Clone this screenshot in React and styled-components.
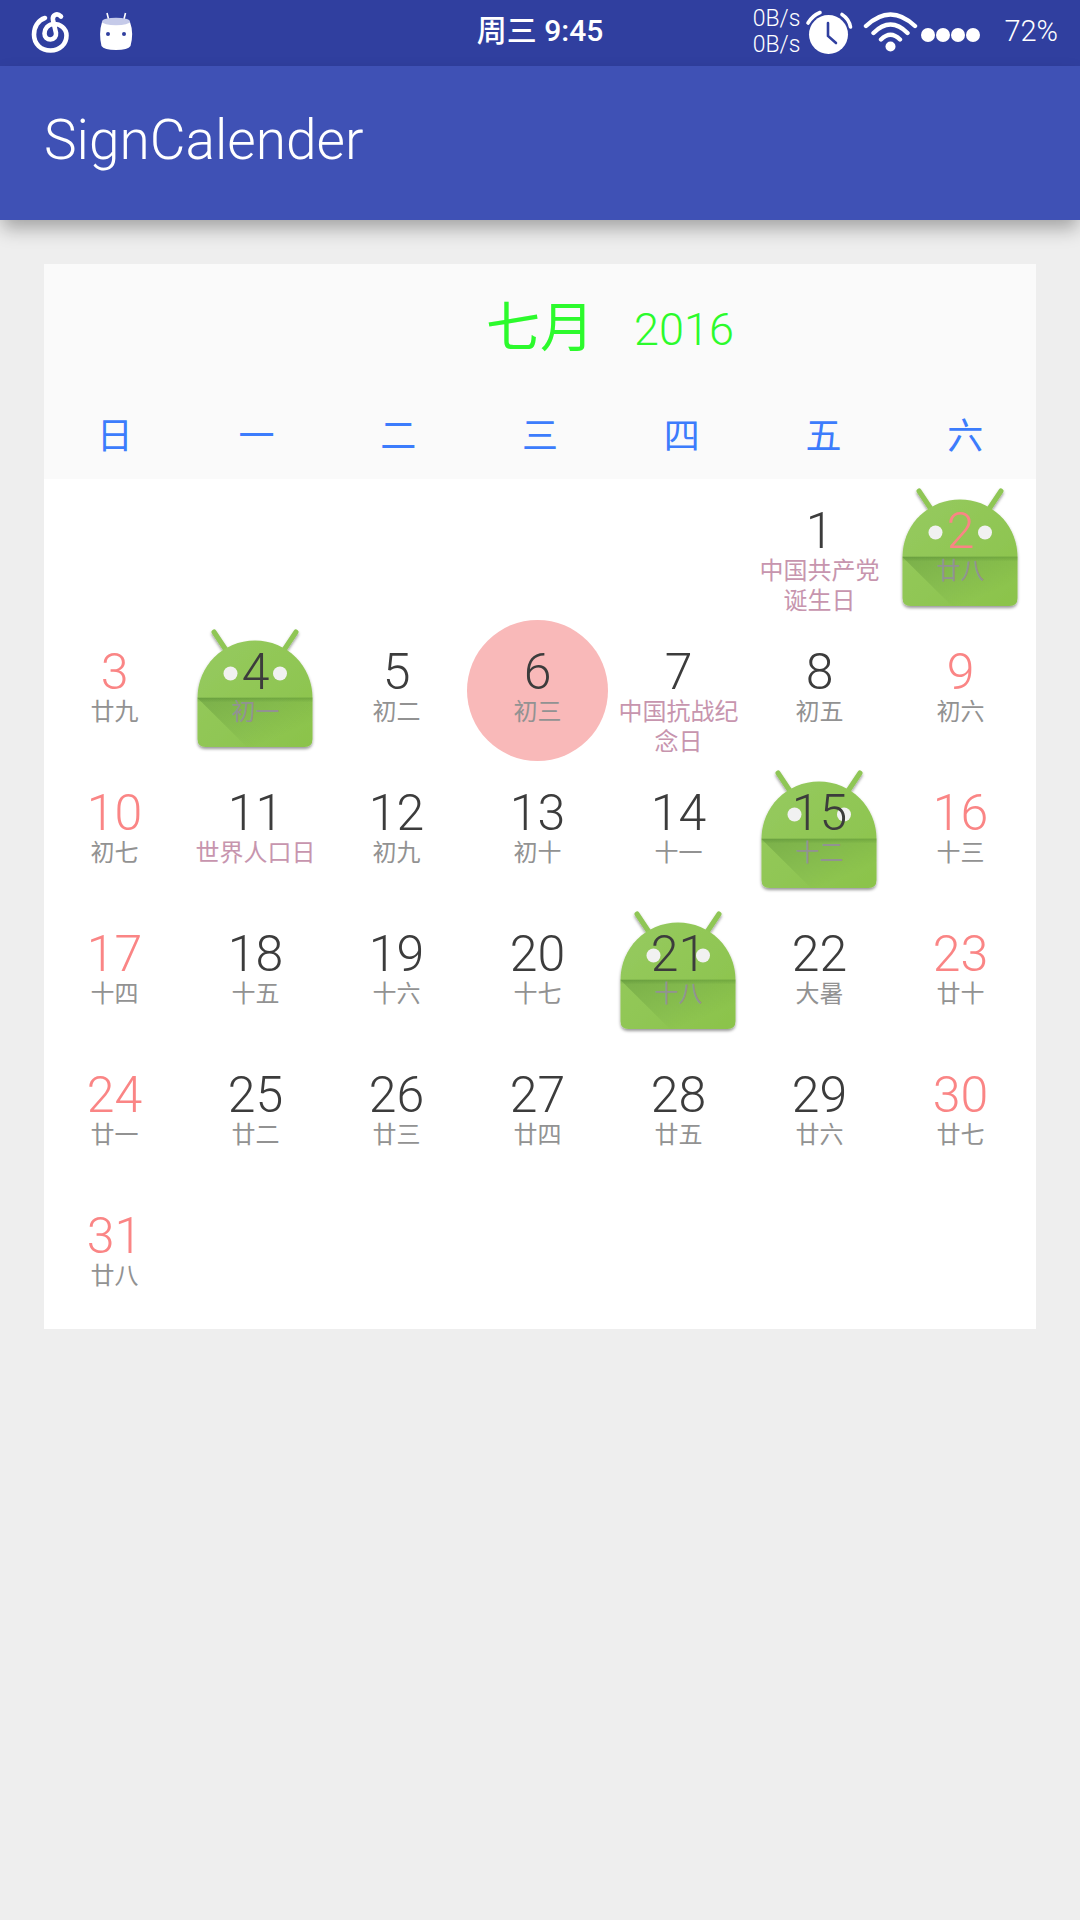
import React from "react";
import styled, { createGlobalStyle } from "styled-components";

const Global = createGlobalStyle`
  * { box-sizing: border-box; }
  html, body { margin: 0; background: #eeeeee; }
  body {
    font-family: Roboto, "Noto Sans CJK SC", sans-serif;
    font-weight: 300;
    min-height: 100vh;
  }
`;

const StatusBar = styled.div`
  display: grid;
  grid-template-columns: 1fr auto 1fr;
  align-items: center;
  height: 66px;
  padding: 0 22px 2px;
  background: #303f9f;
  color: #ffffff;
`;

const Notifications = styled.div`
  display: flex;
  gap: 24px;
  padding-left: 6px;
`;

const Clock = styled.time`
  padding-bottom: 2px;
  font-size: 30px;
  font-weight: 500;
  line-height: 40px;
`;

const Indicators = styled.div`
  display: flex;
  align-items: center;
  justify-content: flex-end;
`;

const Speed = styled.div`
  font-size: 23px;
  line-height: 26px;
`;

const Battery = styled.span`
  margin-left: 20px;
  padding-bottom: 2px;
  font-size: 29px;
`;

const AppBar = styled.header`
  display: flex;
  align-items: center;
  height: 154px;
  padding: 0 44px 6px;
  background: #3f51b5;
  color: #ffffff;
  box-shadow: 0 10px 18px -2px rgba(0, 0, 0, 0.32);
`;

const Title = styled.h1`
  margin: 0;
  font-size: 55px;
  font-weight: 300;
  line-height: 66px;
`;

const Card = styled.main`
  margin: 44px;
  padding-bottom: 4px;
  background: #ffffff;
`;

const MonthHeader = styled.div`
  display: grid;
  grid-template-columns: 1fr auto 1fr;
  align-items: center;
  height: 130px;
  background: #fafafa;
  color: #2cfa2c;
`;

const Month = styled.h2`
  grid-column: 2;
  margin: 0;
  font-size: 54px;
  font-weight: 400;
  line-height: 64px;
`;

const Year = styled.span`
  padding-left: 40px;
  font-size: 45px;
`;

const Calendar = styled.table`
  display: block;
  width: 100%;
`;

const Head = styled.thead`
  display: block;
  background: #fafafa;
`;

const Body = styled.tbody`
  display: block;
  padding-right: 5px;
`;

const Week = styled.tr`
  display: grid;
  grid-template-columns: repeat(7, minmax(0, 1fr));
`;

const Weekday = styled.th`
  padding: 17px 0 15px;
  color: #3c7cfc;
  font-size: 36px;
  font-weight: 400;
  line-height: 53px;
`;

const Day = styled.td`
  position: relative;
  aspect-ratio: 1;
  padding: 28px 8px 0;
  border-radius: 50%;
  background: ${(p) => (p.$today ? "#f9b9b9" : "transparent")};
  text-align: center;
`;

const DayNumber = styled.div`
  position: relative;
  color: ${(p) => (p.$weekend ? "#fa8585" : "#3c3c3c")};
  font-size: 50px;
  line-height: 49px;
`;

const DayLabel = styled.div`
  position: relative;
  color: ${(p) => (p.$festival ? "#c795ae" : "#929292")};
  font-size: 24px;
  font-weight: 400;
  line-height: 30px;
`;

const Badge = styled.svg`
  position: absolute;
  inset: 0;
  width: 100%;
  height: 100%;
`;

const MusicIcon = () => (
  <svg width="44" height="48" viewBox="28 9 44 48" fill="none" stroke="#fff" strokeWidth="4.6" strokeLinecap="round" aria-hidden="true">
    <path d="M45 19C38 21 34 28 34 35.500C34 45 41 51.500 50.500 51.500C60 51.500 66.500 45 66.500 36.500C66.500 29 60 25 54 25C48 25 44.500 30 44.500 34.500C44.500 38 47 40.500 50.500 40.500C54 40.500 56.500 37.500 56 34L53 21C52 16 57 13.500 61 17.500" />
  </svg>
);

const RobotIcon = () => (
  <svg width="40" height="48" viewBox="96 7 40 48" aria-hidden="true">
    <path d="M107 12l2 8M125.500 12l-2 8" stroke="#fff" strokeWidth="1.600" />
    <path d="M102 21Q116 26 130 21Q134 32 130.500 45Q128 49 116 49Q104 49 101.500 45Q98.500 32 102 21Z" fill="#fff" />
    <ellipse cx="116" cy="20.500" rx="14" ry="3.800" fill="#c5cae9" />
    <circle cx="108" cy="33" r="2" fill="#303f9f" />
    <circle cx="124" cy="33" r="2" fill="#303f9f" />
  </svg>
);

const StatusIcons = () => (
  <svg width="184" height="48" viewBox="802 9 184 48" fill="none" stroke="#fff" strokeLinecap="round" aria-hidden="true">
    <circle cx="830.500" cy="35.500" r="19.500" fill="#fff" stroke="none" />
    <path d="M810 24Q814 17 822 13.500M844 15.500Q851 20 852.500 28" strokeWidth="3.600" />
    <path d="M830 24V37L838 44" stroke="#303f9f" strokeWidth="2.600" />
    <path d="M868 27Q892.500 4 917 27M875.500 34Q892.500 17 909.500 34M883 40.500Q892.500 31 902 40.500" strokeWidth="4.400" />
    <g fill="#fff" stroke="none">
      <circle cx="892.500" cy="47.500" r="5" />
      {[930, 945, 960, 975].map((x) => <circle key={x} cx={x} cy="36" r="7" />)}
    </g>
  </svg>
);

const SignBadge = () => (
  <Badge viewBox="0 0 141 141" aria-hidden="true">
    <defs>
      <linearGradient id="face" x1="0" y1="0" x2="1" y2="1">
        <stop offset="0" stopColor="#96ca60" />
        <stop offset="1" stopColor="#8bc34a" />
      </linearGradient>
      <linearGradient id="fold" x1="0" y1="0" x2="1" y2="1">
        <stop offset="0" stopColor="#33691e" stopOpacity="0.26" />
        <stop offset="0.750" stopColor="#33691e" stopOpacity="0" />
      </linearGradient>
      <linearGradient id="crease" x1="0" y1="0" x2="0" y2="1">
        <stop offset="0" stopColor="#33691e" stopOpacity="0.26" />
        <stop offset="1" stopColor="#33691e" stopOpacity="0" />
      </linearGradient>
      <filter id="drop" x="-10%" y="-10%" width="120%" height="125%">
        <feDropShadow dx="0" dy="2" stdDeviation="1.500" floodOpacity="0.4" />
      </filter>
    </defs>
    <g filter="url(#drop)">
      <path d="M29 12L43 33M111 12L97 33" stroke="#8fc655" strokeWidth="5" strokeLinecap="round" />
      <path d="M12.500 78C12.500 46 38 20.500 70 20.500S127.500 46 127.500 78V119Q127.500 127 119.500 127H20.500Q12.500 127 12.500 119Z" fill="url(#face)" />
    </g>
    <path d="M12.500 78L62 127H127.500V78Z" fill="url(#fold)" />
    <rect x="12.500" y="77.500" width="115" height="5" fill="url(#crease)" />
    <circle cx="45.500" cy="53.500" r="7" fill="#f1f1f1" />
    <circle cx="95" cy="53.500" r="7" fill="#f1f1f1" />
  </Badge>
);

const weekdays = ["日", "一", "二", "三", "四", "五", "六"];
const lunar = [
  "中国共产党诞生日", "廿八", "廿九", "初一", "初二", "初三", "中国抗战纪念日", "初五", "初六", "初七",
  "世界人口日", "初九", "初十", "十一", "十二", "十三", "十四", "十五", "十六", "十七",
  "十八", "大暑", "廿十", "廿一", "廿二", "廿三", "廿四", "廿五", "廿六", "廿七", "廿八",
];
const firstWeekday = 5;
const signed = [2, 4, 15, 21];
const festivals = [1, 7, 11];
const today = 6;
const weeks = Array.from({ length: 6 }, (_, w) =>
  Array.from({ length: 7 }, (_, d) => w * 7 + d - firstWeekday + 1)
);

export default function App() {
  return (
    <>
      <Global />
      <StatusBar>
        <Notifications>
          <MusicIcon />
          <RobotIcon />
        </Notifications>
        <Clock>周三 9:45</Clock>
        <Indicators>
          <Speed>
            <div>0B/s</div>
            <div>0B/s</div>
          </Speed>
          <StatusIcons />
          <Battery>72%</Battery>
        </Indicators>
      </StatusBar>
      <AppBar>
        <Title>SignCalender</Title>
      </AppBar>
      <Card>
        <MonthHeader>
          <Month>七月</Month>
          <Year>2016</Year>
        </MonthHeader>
        <Calendar>
          <Head>
            <Week>
              {weekdays.map((name) => <Weekday key={name} scope="col">{name}</Weekday>)}
            </Week>
          </Head>
          <Body>
            {weeks.map((week, w) => (
              <Week key={w}>
                {week.map((n, d) =>
                  n < 1 || n > 31 ? (
                    <Day key={d} />
                  ) : (
                    <Day key={d} $today={n === today}>
                      {signed.includes(n) && <SignBadge />}
                      <DayNumber $weekend={d === 0 || d === 6}>{n}</DayNumber>
                      <DayLabel $festival={festivals.includes(n)}>{lunar[n - 1]}</DayLabel>
                    </Day>
                  )
                )}
              </Week>
            ))}
          </Body>
        </Calendar>
      </Card>
    </>
  );
}
